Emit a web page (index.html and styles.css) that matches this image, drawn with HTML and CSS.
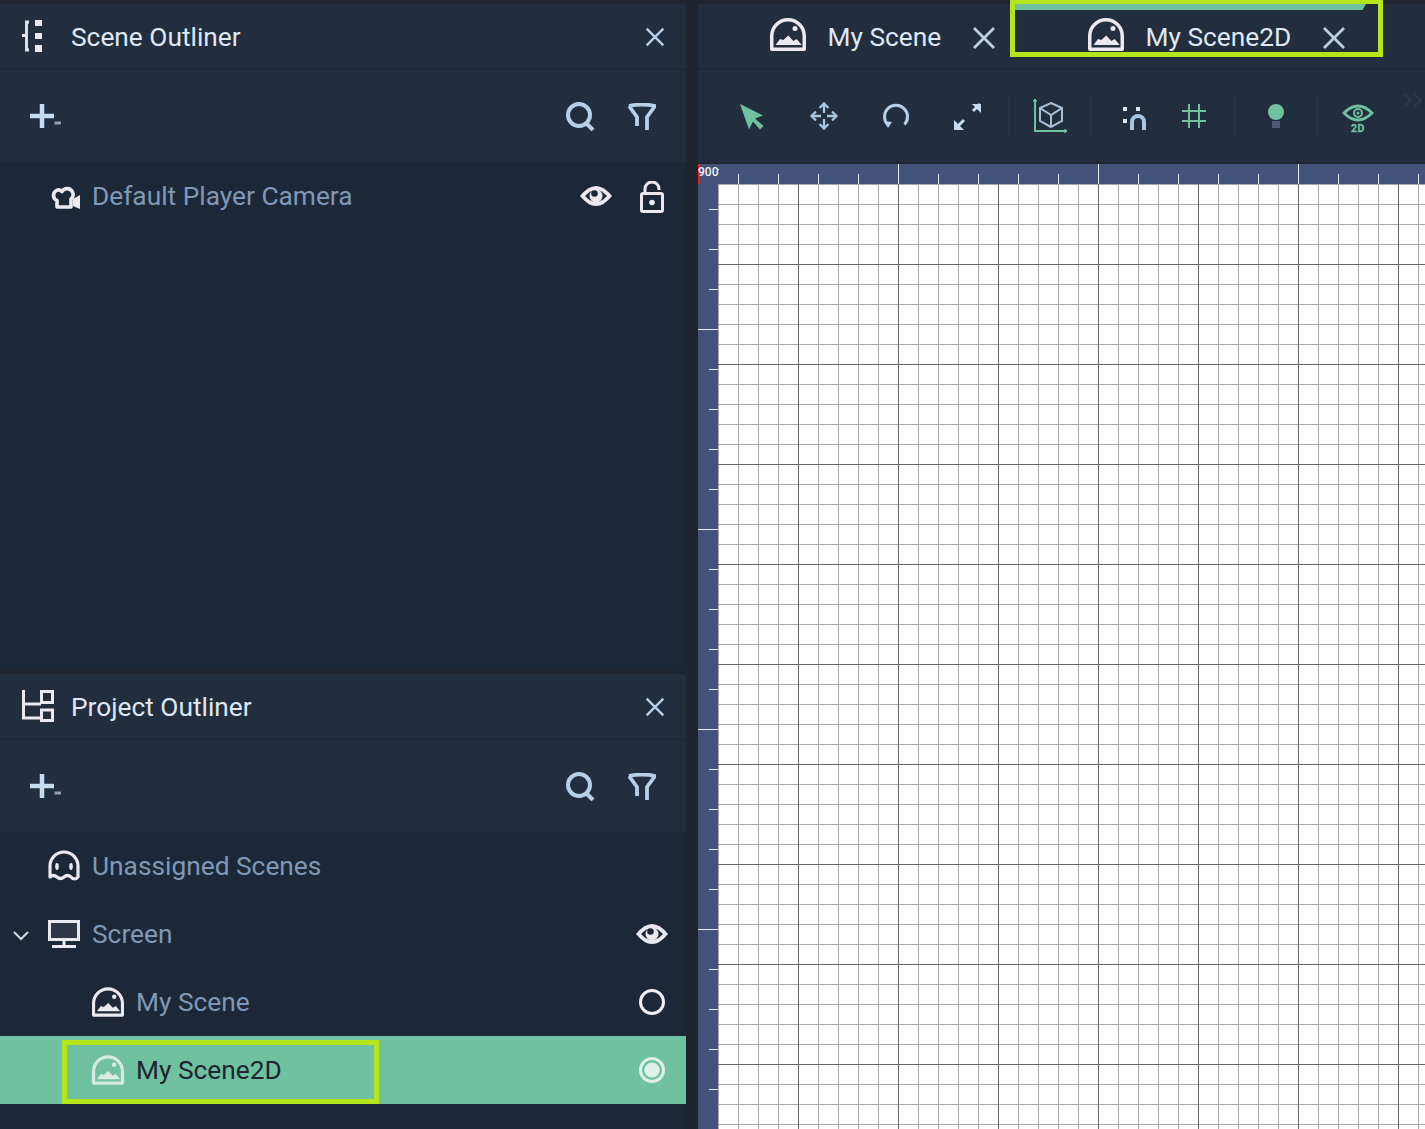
FILE: index.html
```html
<!DOCTYPE html>
<html>
    <head>
        <meta charset="utf-8">
        <title>Scene2D</title>
        <link rel="stylesheet" href="styles.css">
    </head>
    <body>
        <svg class="defs" width="0" height="0">
            <symbol id="scene" viewBox="0 0 36 33">
                <path d="M1.750 31.250V18a16.250 16.250 0 0 1 32.500 0v13.250z" fill="none" stroke="currentColor" stroke-width="3.500" stroke-linejoin="round"/>
                <circle cx="25" cy="10.500" r="2.500" fill="currentColor"/>
                <path d="M5.500 27l4.500-6 3.300 1 5-4.500 5 5.500 3.400-2 5 6z" fill="currentColor"/>
            </symbol>
            <symbol id="close" viewBox="0 0 24 24">
                <path d="M2 2l20 20M22 2L2 22" fill="none" stroke="#b9d0e6" stroke-width="2.800"/>
            </symbol>
            <symbol id="plus" viewBox="0 0 32 24">
                <path d="M12 0v24M0 12h24" fill="none" stroke="#c8dcf1" stroke-width="4.500"/>
                <path d="M24.500 19h6.500" fill="none" stroke="#8fa3ba" stroke-width="3"/>
            </symbol>
            <symbol id="search" viewBox="0 0 29 29">
                <circle cx="13" cy="13" r="11" fill="none" stroke="#b7d0e8" stroke-width="4"/>
                <path d="M20 21l7 7" fill="none" stroke="#b7d0e8" stroke-width="4"/>
            </symbol>
            <symbol id="filter" viewBox="0 0 28 27">
                <path d="M1 3q13-3 26 0l-8 11v13M1 3l8 11v9" fill="none" stroke="#b7d0e8" stroke-width="3.800"/>
            </symbol>
            <symbol id="eye" viewBox="0 0 32 20">
                <path d="M0 10Q16-10 32 10Q16 30 0 10z" fill="#ece8f0"/>
                <path d="M5 10Q16-2 27 10Q16 22 5 10z" fill="#1c2838"/>
                <circle cx="16" cy="10" r="6.500" fill="#ece8f0"/>
                <circle cx="14.500" cy="7.500" r="3.300" fill="#1c2838"/>
            </symbol>
        </svg>

        <div class="left-col">
            <section class="panel scene-panel">
                <header class="panel-head">
                    <svg class="head-icon" width="32" height="32" viewBox="0 0 32 32">
                        <path d="M7 2H4.500V30H7M0 15.500H4.500" fill="none" stroke="#ece8f0" stroke-width="2.800"/>
                        <path d="M13 0h7v6h-7zM13 13h7v6h-7zM13 25h7v7h-7z" fill="#ece8f0"/>
                    </svg>
                    <span class="panel-title">Scene Outliner</span>
                    <svg class="panel-close" width="20" height="20"><use href="#close"/></svg>
                </header>
                <div class="panel-tools">
                    <svg class="plus" width="32" height="24"><use href="#plus"/></svg>
                    <svg class="search" width="29" height="29"><use href="#search"/></svg>
                    <svg class="filter" width="28" height="27"><use href="#filter"/></svg>
                </div>
                <div class="tree">
                    <div class="row">
                        <svg class="row-icon camera" width="30" height="25" viewBox="0 0 30 25">
                            <path d="M7 23V16.500A5.500 5.500 0 0 1 6.500 6.500Q9 5 12 7.500A6 6 0 0 1 22.500 8A6 6 0 0 1 21 15V23Z" fill="none" stroke="#ece8f0" stroke-width="3.600" stroke-linejoin="round"/>
                            <path d="M23 15l7-4v14l-7-3z" fill="#ece8f0"/>
                        </svg>
                        <span class="row-label">Default Player Camera</span>
                        <svg class="row-eye scene-eye" width="32" height="20"><use href="#eye"/></svg>
                        <svg class="lock" width="24" height="32" viewBox="0 0 24 32">
                            <path d="M5 12V8a7 7 0 0 1 14 0v1" fill="none" stroke="#ece8f0" stroke-width="3"/>
                            <rect x="1.500" y="12.500" width="21" height="18" rx="1.500" fill="none" stroke="#ece8f0" stroke-width="3"/>
                            <circle cx="12" cy="21.500" r="2.800" fill="#ece8f0"/>
                        </svg>
                    </div>
                </div>
            </section>

            <section class="panel project-panel">
                <header class="panel-head">
                    <svg class="head-icon" width="32" height="32" viewBox="0 0 32 32">
                        <path d="M1.500 0V28H19M1.500 14H19" fill="none" stroke="#ece8f0" stroke-width="3"/>
                        <path d="M19.500 1.500h11v11h-11zM19.500 20h11v10.500h-11z" fill="none" stroke="#ece8f0" stroke-width="3"/>
                    </svg>
                    <span class="panel-title">Project Outliner</span>
                    <svg class="panel-close" width="20" height="20"><use href="#close"/></svg>
                </header>
                <div class="panel-tools">
                    <svg class="plus" width="32" height="24"><use href="#plus"/></svg>
                    <svg class="search" width="29" height="29"><use href="#search"/></svg>
                    <svg class="filter" width="28" height="27"><use href="#filter"/></svg>
                </div>
                <div class="tree">
                    <div class="row">
                        <svg class="row-icon" width="32" height="32" viewBox="0 0 32 32">
                            <path d="M2 27V16a14 14 0 0 1 28 0v11q-3.500 4-7 0q-3.500-3-7 0q-3.500 3-7 0q-3.500-3-7 0z" fill="none" stroke="#ece8f0" stroke-width="3.200" stroke-linejoin="round"/>
                            <ellipse cx="9" cy="16.500" rx="1.800" ry="3.400" fill="#ece8f0"/>
                            <ellipse cx="23" cy="16.500" rx="1.800" ry="3.400" fill="#ece8f0"/>
                        </svg>
                        <span class="row-label">Unassigned Scenes</span>
                    </div>
                    <div class="row">
                        <svg class="chevron" width="18" height="12" viewBox="0 0 18 12">
                            <path d="M2 2l7 7 7-7" fill="none" stroke="#d6dbe2" stroke-width="2"/>
                        </svg>
                        <svg class="row-icon" width="32" height="28" viewBox="0 0 32 28">
                            <path d="M1.500 1.500h29v18h-29z" fill="#2c3646" stroke="#ece8f0" stroke-width="3"/>
                            <path d="M16 20v6M4 26.500h24" fill="none" stroke="#ece8f0" stroke-width="3"/>
                        </svg>
                        <span class="row-label">Screen</span>
                        <svg class="row-eye" width="32" height="20"><use href="#eye"/></svg>
                    </div>
                    <div class="row child">
                        <svg class="row-icon scene-icon" width="32" height="30"><use href="#scene"/></svg>
                        <span class="row-label">My Scene</span>
                        <span class="radio"></span>
                    </div>
                    <div class="row child selected">
                        <svg class="row-icon scene-icon" width="32" height="30"><use href="#scene"/></svg>
                        <span class="row-label">My Scene2D</span>
                        <span class="radio radio-on"></span>
                        <div class="mark mark-row"></div>
                    </div>
                </div>
            </section>
        </div>

        <div class="right-col">
            <div class="tabs">
                <div class="tab tab-first">
                    <svg class="tab-icon scene-icon" width="36" height="33"><use href="#scene"/></svg>
                    <span class="tab-name">My Scene</span>
                    <svg class="tab-close" width="24" height="24"><use href="#close"/></svg>
                </div>
                <div class="tab tab-active">
                    <div class="tab-bar"></div>
                    <svg class="tab-icon scene-icon" width="36" height="33"><use href="#scene"/></svg>
                    <span class="tab-name">My Scene2D</span>
                    <svg class="tab-close" width="24" height="24"><use href="#close"/></svg>
                    <div class="mark mark-tab"></div>
                </div>
            </div>

            <div class="toolbar">
                <div class="tool-group first">
                    <svg class="tool" width="36" height="36" viewBox="0 0 36 36">
                        <path d="M6 6l23 11.500-8 3 8.500 7.500-3.500 3.500-7-8-4 8z" fill="#6fc1a0"/>
                    </svg>
                    <svg class="tool" width="36" height="36" viewBox="0 0 36 36" fill="none" stroke="#a9c5df" stroke-width="2.300">
                        <path d="M18 7v8M18 21v8M7 18h8M21 18h8"/>
                        <path d="M13.500 10L18 5.500 22.500 10M13.500 26L18 30.500 22.500 26M10 13.500L5.500 18 10 22.500M26 13.500L30.500 18 26 22.500"/>
                    </svg>
                    <svg class="tool" width="36" height="36" viewBox="0 0 36 36" fill="none" stroke="#b7d0e8" stroke-width="3">
                        <path d="M10 27A11.500 11.500 0 1 1 26.500 26.500"/>
                        <path d="M6 23l8 1-4 6z" fill="#b7d0e8" stroke="none"/>
                    </svg>
                    <svg class="tool" width="36" height="36" viewBox="0 0 36 36" fill="none" stroke="#c8dcf1" stroke-width="3">
                        <path d="M23 13l7-7M7 29l7-7"/>
                        <path d="M22 6h9v9z" fill="#c8dcf1" stroke="none"/>
                        <path d="M4 22v10h10z" fill="#c8dcf1" stroke="none"/>
                    </svg>
                </div>
                <div class="tool-group">
                    <svg class="tool" width="36" height="36" viewBox="0 0 36 36" fill="none">
                        <path d="M3 1V33H35" stroke="#6fc1a0" stroke-width="2"/>
                        <path d="M1 3h4M33 31v4" stroke="#6fc1a0" stroke-width="1.500"/>
                        <path d="M19 5l11 5v13l-11 6-11-6V10zM8 10l11 7 11-7M19 17v12" stroke="#a9bfd8" stroke-width="2"/>
                    </svg>
                </div>
                <div class="tool-group wide">
                    <svg class="tool" width="36" height="36" viewBox="0 0 36 36">
                        <path d="M7 9h4v4H7zM20 9h4v4h-4zM7 21h4v4H7z" fill="#dfe8f2"/>
                        <path d="M14 32V24a8 8 0 0 1 16 0v8h-4v-8a4 4 0 0 0-8 0v8z" fill="#a9c5df"/>
                    </svg>
                    <svg class="tool" width="36" height="36" viewBox="0 0 36 36">
                        <path d="M13 6v24M23 6v24M6 13h24M6 23h24" fill="none" stroke="#6fc1a0" stroke-width="2"/>
                    </svg>
                </div>
                <div class="tool-group">
                    <svg class="tool" width="36" height="36" viewBox="0 0 36 36">
                        <circle cx="18" cy="14" r="8" fill="#6fc1a0"/>
                        <rect x="14" y="23" width="8" height="7" fill="#4f5b74"/>
                    </svg>
                </div>
                <div class="tool-group">
                    <svg class="tool" width="36" height="36" viewBox="0 0 36 36">
                        <path d="M4 15Q18 1 32 15Q18 29 4 15z" fill="none" stroke="#6fc1a0" stroke-width="2.800"/>
                        <circle cx="18" cy="15" r="4" fill="none" stroke="#6fc1a0" stroke-width="2"/>
                        <circle cx="18" cy="15" r="1.500" fill="#6fc1a0"/>
                        <text x="18" y="34" class="tool-text">2D</text>
                    </svg>
                </div>
                <svg class="more" width="20" height="15" viewBox="0 0 20 15">
                    <path d="M1 1l7 6.500-7 6.500M11 1l7 6.500-7 6.500" fill="none" stroke="#2e3947" stroke-width="2"/>
                </svg>
            </div>

            <div class="viewport">
                <span class="ruler-num">900</span>
                <div class="canvas"></div>
            </div>
        </div>
    </body>
</html>
```

FILE: styles.css
```css
html, body {
    margin: 0;
    height: 100%;
}
body {
    display: flex;
    gap: 12px;
    height: 1129px;
    padding-top: 4px;
    box-sizing: border-box;
    overflow: hidden;
    background-color: #1e2530;
    font-family: Roboto, sans-serif;
    font-size: 26.3px;
}
svg {
    display: block;
    flex: none;
}
.defs {
    position: absolute;
}

/* left side */
.left-col {
    width: 686px;
    display: flex;
    flex-direction: column;
    gap: 4px;
}
.panel {
    display: flex;
    flex-direction: column;
    background-color: #1c2838;
}
.scene-panel {
    height: 666px;
}
.project-panel {
    flex: 1;
}
.panel-head {
    height: 64px;
    display: flex;
    align-items: center;
    padding: 0 21px 0 22px;
    background-color: #222d3e;
    border-bottom: 2px solid #1e2836;
    border-radius: 0 4px 0 0;
}
.head-icon {
    margin-right: 17px;
}
.panel-title {
    margin-top: 2px;
    color: #dfe8f2;
}
.panel-close {
    margin: 2px 0 0 auto;
}
.panel-tools {
    height: 92px;
    display: flex;
    align-items: center;
    padding: 0 30px;
    background-color: #222d3e;
    border-radius: 0 4px 0 0;
}
.search {
    margin-left: auto;
}
.filter {
    margin-left: 33px;
}
.tree {
    flex: 1;
}
.row {
    position: relative;
    height: 68px;
    display: flex;
    align-items: center;
    padding: 0 18px 0 48px;
    color: #8098b6;
}
.row.child {
    padding-left: 92px;
}
.row.selected {
    background-color: #6fc1a0;
    color: #1e2530;
}
.row-icon {
    margin-right: 12px;
    color: #ece8f0;
}
.row-icon.camera {
    margin: 0 12px 0 2px;
    width: 30px;
}
.selected .row-icon {
    color: #dbe9e5;
}
.chevron {
    position: absolute;
    left: 12px;
    top: 30px;
}
.row-eye {
    margin-left: auto;
}
.scene-eye {
    margin-right: 28px;
}
.lock {
    margin-right: 4px;
    margin-top: 2px;
}
.radio {
    margin: 0 3px 0 auto;
    width: 26px;
    height: 26px;
    box-sizing: border-box;
    border: 3px solid #f1eff4;
    border-radius: 50%;
}
.radio-on {
    border-color: #dff0ea;
    background: radial-gradient(circle, #dff0ea 0 7px, transparent 8px);
}

/* lime boxes drawn on top of the screenshot */
.mark {
    position: absolute;
    box-sizing: border-box;
    border: 5px solid #b5e61d;
}
.mark-row {
    left: 62px;
    top: 4px;
    width: 317px;
    height: 64px;
}
.mark-tab {
    left: -5px;
    top: -5px;
    width: 373px;
    height: 58px;
}

/* right side */
.right-col {
    flex: 1;
    min-width: 0;
    display: flex;
    flex-direction: column;
}
.tabs {
    height: 64px;
    display: flex;
    background-color: #222d3e;
    border-bottom: 2px solid #1e2836;
}
.tab {
    position: relative;
    display: flex;
    align-items: center;
    color: #dfe8f2;
}
.tab-first {
    width: 317px;
    padding-left: 72px;
    box-sizing: border-box;
}
.tab-active {
    width: 351px;
    padding-left: 73px;
    box-sizing: border-box;
}
.tab-icon {
    margin-bottom: 3px;
}
.tab-name {
    margin: 2px 31px 0 21.500px;
}
.tab-close {
    margin-top: 3px;
}
.scene-icon {
    color: #ece8f0;
}
.tab-bar {
    position: absolute;
    left: 0;
    top: 0;
    width: 100%;
    height: 6px;
    background-color: #6fc1a0;
    clip-path: polygon(0 0, 100% 0, 99% 100%, 0 100%);
}
.toolbar {
    height: 92px;
    display: flex;
    align-items: center;
    background-color: #222d3e;
}
.tool-group {
    height: 42px;
    display: flex;
    align-items: center;
    gap: 36px;
    padding: 0 22px;
    border-left: 2px solid #27344a;
}
.tool-group.first {
    border-left: 0;
    padding-left: 36px;
}
.tool-group.wide {
    gap: 24px;
    padding-left: 24px;
}
.tool-text {
    font: bold 10.500px Roboto, sans-serif;
    fill: #6fc1a0;
    stroke: #6fc1a0;
    stroke-width: .3px;
    text-anchor: middle;
    letter-spacing: .6px;
}
.more {
    align-self: flex-start;
    margin: 23px 2px 0 auto;
}
.viewport {
    position: relative;
    flex: 1;
    margin-top: 2px;
    padding: 20px 0 0 20px;
    background-color: #43527a;
    background-image:
        linear-gradient(to right, #e8ecf2 1px, transparent 1px),
        linear-gradient(to right, #e8ecf2 1px, transparent 1px),
        linear-gradient(to bottom, #e8ecf2 1px, transparent 1px),
        linear-gradient(to bottom, #e8ecf2 1px, transparent 1px);
    background-size: 200px 20px, 40px 10px, 20px 200px, 10px 40px;
    background-position: 200px 0, 40px 10px, 0 165px, 11px 45px;
    background-repeat: repeat-x, repeat-x, repeat-y, repeat-y;
}
.ruler-num {
    position: absolute;
    left: 0;
    top: 0;
    width: 20px;
    height: 20px;
    font-size: 12px;
    font-weight: 500;
    line-height: 16px;
    color: #f1f3f7;
    background: linear-gradient(#ff1a1a, #ff1a1a) no-repeat 0 0 / 2px 20px, #43527a;
}
.canvas {
    height: 100%;
    box-sizing: border-box;
    background-color: #ffffff;
    background-image:
        linear-gradient(to right, #666666 1px, transparent 1px),
        linear-gradient(to bottom, #666666 1px, transparent 1px),
        linear-gradient(to right, #aaaaaa 1px, transparent 1px),
        linear-gradient(to bottom, #aaaaaa 1px, transparent 1px);
    background-size: 100px 100px, 100px 100px, 20px 20px, 20px 20px;
    background-position: 80px 0, 0 80px, 0 0, 0 0;
}
```
